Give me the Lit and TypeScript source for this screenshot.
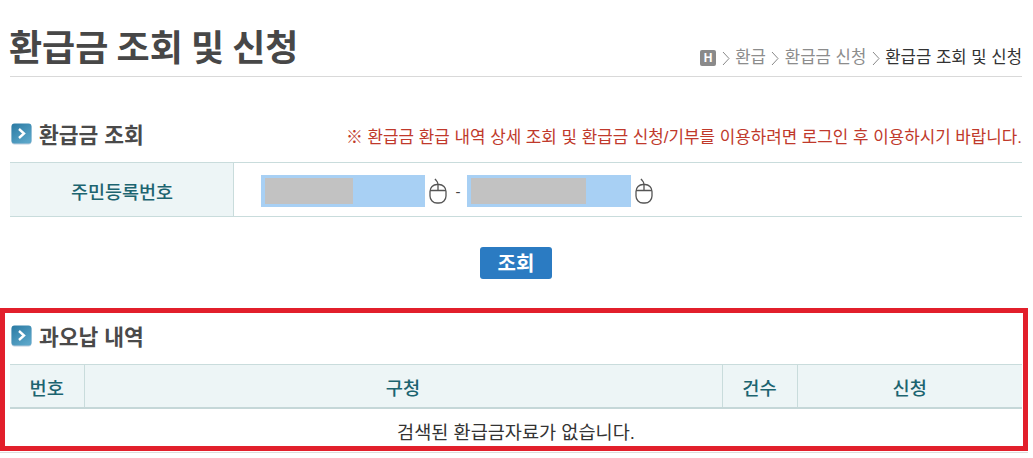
import { LitElement, html, css, svg } from "lit";
import { customElement } from "lit/decorators.js";

const mouse = () => html`<svg class="mouse" width="18" height="26" viewBox="0 0 18 26" fill="none" stroke="#555" stroke-width="1.3">
  <path d="M9 6.5C9 3.5 7.5 3 6 1" />
  <rect x="1" y="6.5" width="16" height="18.5" rx="7" />
  <path d="M1 12.5H17M9 6.5V12.5" />
</svg>`;

const bullet = () => html`<svg class="bullet" width="21" height="21" viewBox="0 0 21 21">
  <defs><linearGradient id="bg" x1="0" y1="0" x2="0.7" y2="1"><stop offset="0" stop-color="#2a7aa3"/><stop offset="1" stop-color="#5ba6c9"/></linearGradient></defs>
  <rect x="0.5" y="0.5" width="20" height="20" rx="3" fill="url(#bg)"/>
  <path d="M8 6L13 10.5L8 15" fill="none" stroke="#fff" stroke-width="2.4"/>
</svg>`;

@customElement("app-root")
export class AppRoot extends LitElement {
  static styles = css`
    :host { display: block; width: 1033px; height: 458px; overflow: hidden; background: #fff; font-family: "Liberation Sans", "Noto Sans CJK KR", sans-serif; color: #333; }
    .wrap { padding: 0 11px 0 10px; }
    .head { display: flex; justify-content: space-between; align-items: flex-end; height: 76px; border-bottom: 1px solid #d9d9d9; }
    h1 { margin: 0 0 9px -1px; font-size: 36px; line-height: 44px; font-weight: 700; color: #474747; font-family: "Noto Sans CJK KR", sans-serif; }
    .crumb { display: flex; align-items: center; gap: 5.5px; font-size: 16.7px; line-height: 18px; color: #8c8c8c; margin-bottom: 9px; }
    .crumb b { font-weight: 400; color: #333; }
    .home { width: 16px; height: 16px; border-radius: 2px; background: #8a8a8a; color: #fff; font-size: 12px; font-weight: 700; line-height: 16px; text-align: center; }
    .chev { width: 8px; height: 15px; }
    .title-row { display: flex; justify-content: space-between; align-items: center; height: 34px; margin-top: 40px; }
    .sec { display: flex; align-items: center; gap: 7px; font-size: 21.5px; font-weight: 700; color: #4a4a4a; padding: 0 0 2px 1px; }
    .bullet { filter: drop-shadow(0 1px 0 #bcd); }
    .notice { font-size: 16.85px; color: #c0392b; margin-top: 3px; }
    .form { display: flex; height: 55px; margin-top: 11px; border-top: 1px solid #c9dcdc; border-bottom: 1px solid #c9dcdc; box-sizing: border-box; }
    .form .label { width: 224px; flex: none; background: #edf5f6; border-right: 1px solid #c9dcdc; display: flex; align-items: center; justify-content: center; color: #1c6470; font-size: 18.5px; font-weight: 500; box-sizing: border-box; padding: 2px 0 0 1px; }
    .fields { display: flex; align-items: center; padding: 3px 0 0 27px; }
    .field { width: 164px; height: 32px; background: #a8d0f4; display: flex; align-items: center; box-sizing: border-box; padding-left: 4px; }
    .mask { height: 26px; background: #c2c2c2; }
    .mouse { margin: 0 3px 0 4px; }
    .dash { margin: 0 5px 0 4px; font-size: 15px; color: #444; width: 8px; text-align: center; }
    .btn-row { display: flex; justify-content: center; margin-top: 30px; }
    .btn { width: 72px; height: 32px; border: 0; padding: 0 0 2px; border-radius: 3px; background: #2b7bc2; color: #fff; font: 700 20px "Noto Sans CJK KR", sans-serif; }
    .red { margin-top: 29px; height: 143px; width: 1028px; box-sizing: border-box; border: 5px solid #e21f2b; padding: 0 0 0 5px; box-shadow: 0 1px 0 #fff, 0 2px 0 #ddd; }
    .red .title-row { margin-top: 6px; width: 1012px; }
    table { border-collapse: collapse; table-layout: fixed; width: 1012px; margin-top: 11px; font-size: 18.7px; }
    th { height: 42px; padding: 0; background: #edf5f6; color: #1c6470; font-weight: 500; border-top: 1px solid #c9dcdc; border-bottom: 2px solid #c5d7d8; border-left: 1px solid #c9dcdc; }
    th:first-child { border-left: 0; }
    td { text-align: center; height: 39px; padding: 2px 0 0; font-size: 18.6px; color: #333; }
  `;

  render() {
    const chev = svg`<path d="M1 1L7 7.5L1 14" fill="none" stroke="#888" stroke-width="1"/>`;
    const c = () => html`<svg class="chev" viewBox="0 0 8 15">${chev}</svg>`;
    return html`<div class="wrap">
      <div class="head">
        <h1>환급금 조회 및 신청</h1>
        <div class="crumb"><span class="home">H</span>${c()}<span>환급</span>${c()}<span>환급금 신청</span>${c()}<b>환급금 조회 및 신청</b></div>
      </div>
      <div class="title-row">
        <div class="sec">${bullet()}환급금 조회</div>
        <div class="notice">※ 환급금 환급 내역 상세 조회 및 환급금 신청/기부를 이용하려면 로그인 후 이용하시기 바랍니다.</div>
      </div>
      <div class="form">
        <div class="label">주민등록번호</div>
        <div class="fields">
          <div class="field"><div class="mask" style="width:88px"></div></div>${mouse()}
          <span class="dash">-</span>
          <div class="field"><div class="mask" style="width:115px"></div></div>${mouse()}
        </div>
      </div>
      <div class="btn-row"><button class="btn">조회</button></div>
    </div>
    <div class="red">
      <div class="title-row"><div class="sec">${bullet()}과오납 내역</div></div>
      <table>
        <colgroup><col style="width:74px"/><col style="width:638px"/><col style="width:75px"/><col/></colgroup>
        <thead><tr><th>번호</th><th>구청</th><th>건수</th><th>신청</th></tr></thead>
        <tbody><tr><td colspan="4">검색된 환급금자료가 없습니다.</td></tr></tbody>
      </table>
    </div>`;
  }
}
